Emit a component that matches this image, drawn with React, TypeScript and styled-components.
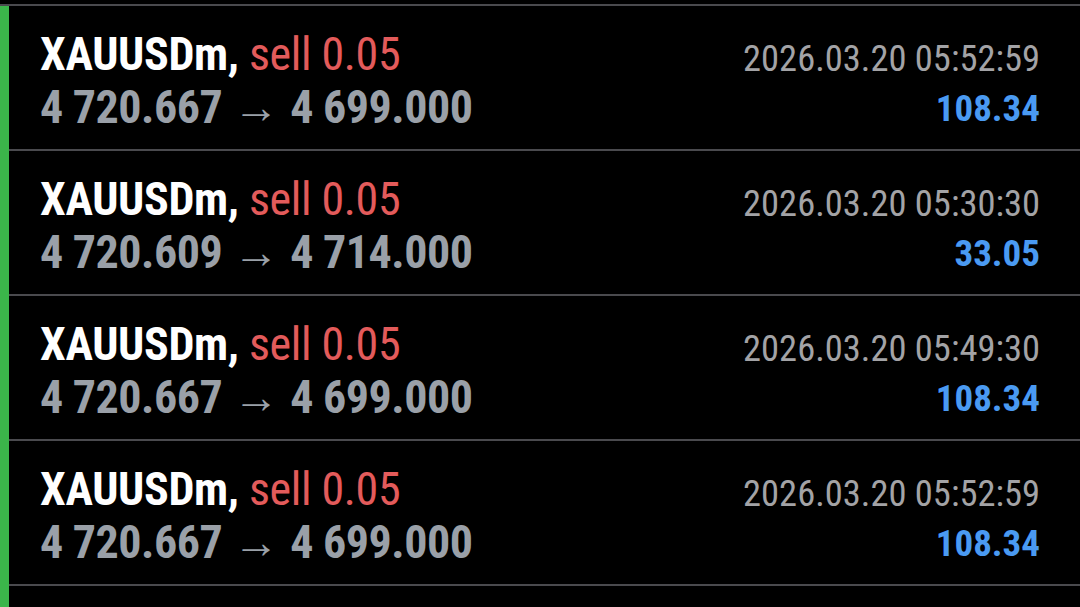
import styled, { createGlobalStyle } from 'styled-components';

const GlobalStyle = createGlobalStyle`
  html, body {
    margin: 0;
    padding: 0;
    background: #000;
  }
  body {
    font-family: 'Roboto Condensed', Roboto, 'Liberation Sans', sans-serif;
  }
`;

const Screen = styled.div`
  width: 1080px;
  height: 607px;
  overflow: hidden;
  background: #000;
  padding-top: 4px;
  box-sizing: border-box;
`;

const List = styled.div`
  display: flex;
  border-top: 2px solid #4a4a4e;
  height: 100%;
`;

const Marker = styled.div`
  width: 9px;
  flex-shrink: 0;
  background: #3bb54a;
`;

const Rows = styled.div`
  flex: 1;
  display: flex;
  flex-direction: column;
`;

const Row = styled.div`
  height: 143px;
  flex-shrink: 0;
  display: flex;
  justify-content: space-between;
  padding: 0 40px 0 31px;
  border-bottom: 2px solid #4a4a4e;
`;

const Left = styled.div`
  display: flex;
  flex-direction: column;
  padding-top: 22px;
`;

const Right = styled.div`
  display: flex;
  flex-direction: column;
  align-items: flex-end;
  padding-top: 27px;
`;

const Title = styled.div`
  font-size: 46px;
  line-height: 53px;
  letter-spacing: -0.35px;
  white-space: nowrap;
`;

const Symbol = styled.span`
  color: #fff;
  font-weight: 700;
`;

const Side = styled.span`
  color: #e35b5b;
`;

const Prices = styled.div`
  display: flex;
  align-items: baseline;
  font-size: 46px;
  line-height: 53px;
  font-weight: 700;
  letter-spacing: -0.5px;
  color: #9aa0a8;
  white-space: nowrap;
`;

const Arrow = styled.span`
  font-weight: 300;
  font-size: 46px;
  letter-spacing: 0;
  margin: -3px 11px 0 11px;
`;

const Time = styled.div`
  font-size: 36.5px;
  line-height: 51px;
  color: #a3a3a6;
  white-space: nowrap;
`;

const Profit = styled.div`
  font-size: 37px;
  line-height: 50px;
  font-weight: 700;
  color: #4a9af2;
`;

type Deal = {
  open: string;
  close: string;
  time: string;
  profit: string;
};

const deals: Deal[] = [
  { open: '4 720.667', close: '4 699.000', time: '2026.03.20 05:52:59', profit: '108.34' },
  { open: '4 720.609', close: '4 714.000', time: '2026.03.20 05:30:30', profit: '33.05' },
  { open: '4 720.667', close: '4 699.000', time: '2026.03.20 05:49:30', profit: '108.34' },
  { open: '4 720.667', close: '4 699.000', time: '2026.03.20 05:52:59', profit: '108.34' },
];

function App() {
  return (
    <>
      <GlobalStyle />
      <Screen>
        <List>
          <Marker />
          <Rows>
            {deals.map((deal, i) => (
              <Row key={i}>
                <Left>
                  <Title>
                    <Symbol>XAUUSDm,</Symbol> <Side>sell 0.05</Side>
                  </Title>
                  <Prices>
                    <span>{deal.open}</span>
                    <Arrow>→</Arrow>
                    <span>{deal.close}</span>
                  </Prices>
                </Left>
                <Right>
                  <Time>{deal.time}</Time>
                  <Profit>{deal.profit}</Profit>
                </Right>
              </Row>
            ))}
          </Rows>
        </List>
      </Screen>
    </>
  );
}

export default App;
